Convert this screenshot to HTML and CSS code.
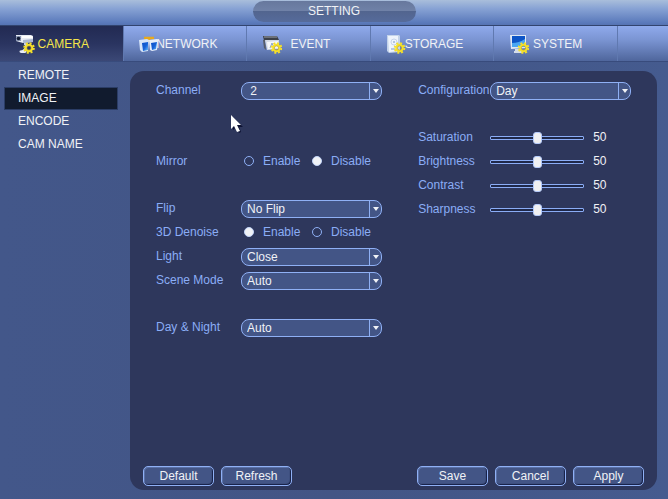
FILE: index.html
```
<!DOCTYPE html>
<html lang="en">
<head>
  <meta charset="UTF-8">
  <meta name="viewport" content="width=device-width, initial-scale=1.0">
  <title>Setting</title>
  <link rel="stylesheet" href="styles.css">
</head>
<body>
  <svg width="0" height="0" class="defs">
    <defs>
      <linearGradient id="blue" x1="0" y1="0" x2="1" y2="1">
        <stop offset="0" stop-color="#0a4fc4"/>
        <stop offset="0.55" stop-color="#1763d8"/>
        <stop offset="1" stop-color="#6cc4ff"/>
      </linearGradient>
      <g id="gear">
        <circle r="4.800" fill="none" stroke="#f5e02a" stroke-width="2" stroke-dasharray="2 1.770"/>
        <circle r="3.200" fill="none" stroke="#f5e02a" stroke-width="2.200"/>
        <circle r="2.100" fill="none" stroke="#b09420" stroke-width="0.500"/>
      </g>
    </defs>
  </svg>

  <header class="titlebar">
    <h1 class="title">SETTING</h1>
  </header>

  <nav class="tabs">
    <a class="tab active" href="#camera">
      <svg class="icon" viewBox="0 0 20 20">
        <path d="M1 1 L16 1 L18 2 L18 8 L8 9 L1 7 Z" fill="#e9edf5"/>
        <path d="M7 2 L17 2 L18 4 L7 4 Z" fill="#fff"/>
        <path d="M8 6 L18 5 L18 8 L8 9 Z" fill="#a9b6cf"/>
        <rect x="1" y="2" width="5" height="5" fill="#8d99b5"/>
        <circle cx="3.500" cy="4.500" r="1.800" fill="#111a33"/>
        <path d="M9 10 L11 10 L11 14 L8 17" fill="none" stroke="#c9d2e4" stroke-width="2"/>
        <ellipse cx="8" cy="17.500" rx="3.500" ry="1.500" fill="#e9edf5"/>
        <use href="#gear" x="14" y="14"/>
      </svg>
      <span class="tab-text">CAMERA</span>
    </a>
    <a class="tab" href="#network">
      <svg class="icon" viewBox="0 0 20 20">
        <path d="M5 4 H15 M10 3 V8" stroke="#e8a91c" stroke-width="2.500"/>
        <path d="M0 6 L8 5 L10 6 L9 17 L3 18 L1 16 Z" fill="#d7e5f8"/>
        <path d="M3 9 L9 8 L9 16 L4 17 Z" fill="url(#blue)"/>
        <path d="M10 6 L18 5 L19 6 L18 16 L13 17 L11 16 Z" fill="#e6effb"/>
        <path d="M12 9 L18 8 L17 15 L13 16 Z" fill="url(#blue)"/>
      </svg>
      <span class="tab-text">NETWORK</span>
    </a>
    <a class="tab" href="#event">
      <svg class="icon" viewBox="0 0 20 20">
        <path d="M1 2 L15 2 L17 6 L2 7 Z" fill="#3c4048"/>
        <path d="M2 3 H15" stroke="#9ba1ac" stroke-width="1"/>
        <path d="M1 6 L3 6 L4 16 L2 14 Z" fill="#565c68"/>
        <path d="M3 6 L17 6 L17 15 L5 16 Z" fill="#d5dbe6"/>
        <path d="M5 8 L16 7 L16 14 L6 15 Z" fill="#f5f7fa"/>
        <path d="M8 14 L10 9 L12 14" fill="none" stroke="#8aa2cb" stroke-width="1"/>
        <use href="#gear" x="14.500" y="14"/>
      </svg>
      <span class="tab-text">EVENT</span>
    </a>
    <a class="tab" href="#storage">
      <svg class="icon" viewBox="0 0 20 20">
        <path d="M1 1 L13 1 L14 2 L14 18 L3 19 L1 17 Z" fill="#c3d3ea"/>
        <path d="M2 2 L12 2 L12 17 L3 18 Z" fill="#eef4fc"/>
        <circle cx="8" cy="8" r="3" fill="none" stroke="#c6d4ea" stroke-width="1"/>
        <circle cx="8" cy="8" r="1" fill="#9fb5d9"/>
        <path d="M5 15 H9" stroke="#b4c6e3" stroke-width="2"/>
        <use href="#gear" x="13.500" y="14"/>
      </svg>
      <span class="tab-text">STORAGE</span>
    </a>
    <a class="tab" href="#system">
      <svg class="icon" viewBox="0 0 20 20">
        <path d="M1 1 L17 1 L17 14 L2 15 Z" fill="#dfe8f4"/>
        <path d="M3 2 L16 2 L16 13 L3 13 Z" fill="#0d54c6"/>
        <path d="M3 9 Q10 9 16 5 L16 13 L3 13 Z" fill="#4aa6f2"/>
        <path d="M6 15 H12 V17 H14 V19 H5 V17 H6 Z" fill="#d4dce8"/>
        <use href="#gear" x="14.500" y="14"/>
      </svg>
      <span class="tab-text">SYSTEM</span>
    </a>
  </nav>

  <div class="content">
    <aside class="sidebar">
      <a class="side-link" href="#remote">REMOTE</a>
      <a class="side-link selected" href="#image">IMAGE</a>
      <a class="side-link" href="#encode">ENCODE</a>
      <a class="side-link" href="#camname">CAM NAME</a>
    </aside>

    <form class="panel">
      <div class="fields">
        <div class="column left">
          <div class="group">
            <div class="row">
              <label class="label" for="channel">Channel</label>
              <span class="dropdown"><select id="channel"><option>&nbsp;2</option></select></span>
            </div>
          </div>
          <div class="group wide">
            <div class="row">
              <span class="label">Mirror</span>
              <label class="choice"><input type="radio" name="mirror">Enable</label>
              <label class="choice"><input type="radio" name="mirror" checked>Disable</label>
            </div>
          </div>
          <div class="group spaced">
            <div class="row">
              <label class="label" for="flip">Flip</label>
              <span class="dropdown"><select id="flip"><option>No Flip</option></select></span>
            </div>
            <div class="row">
              <span class="label">3D Denoise</span>
              <label class="choice"><input type="radio" name="denoise" checked>Enable</label>
              <label class="choice"><input type="radio" name="denoise">Disable</label>
            </div>
            <div class="row">
              <label class="label" for="light">Light</label>
              <span class="dropdown"><select id="light"><option>Close</option></select></span>
            </div>
            <div class="row">
              <label class="label" for="scene">Scene Mode</label>
              <span class="dropdown"><select id="scene"><option>Auto</option></select></span>
            </div>
          </div>
          <div class="group spaced">
            <div class="row">
              <label class="label" for="daynight">Day &amp; Night</label>
              <span class="dropdown"><select id="daynight"><option>Auto</option></select></span>
            </div>
          </div>
        </div>

        <div class="column right">
          <div class="group">
            <div class="row">
              <label class="label" for="config">Configuration</label>
              <span class="dropdown"><select id="config"><option>Day</option></select></span>
            </div>
          </div>
          <div class="group spaced">
            <div class="row">
              <label class="label" for="saturation">Saturation</label>
              <input class="slider" type="range" id="saturation" value="50">
              <output class="value" for="saturation">50</output>
            </div>
            <div class="row">
              <label class="label" for="brightness">Brightness</label>
              <input class="slider" type="range" id="brightness" value="50">
              <output class="value" for="brightness">50</output>
            </div>
            <div class="row">
              <label class="label" for="contrast">Contrast</label>
              <input class="slider" type="range" id="contrast" value="50">
              <output class="value" for="contrast">50</output>
            </div>
            <div class="row">
              <label class="label" for="sharpness">Sharpness</label>
              <input class="slider" type="range" id="sharpness" value="50">
              <output class="value" for="sharpness">50</output>
            </div>
          </div>
        </div>
      </div>

      <div class="actions">
        <button class="btn" type="button">Default</button>
        <button class="btn" type="button">Refresh</button>
        <button class="btn push" type="button">Save</button>
        <button class="btn" type="button">Cancel</button>
        <button class="btn" type="button">Apply</button>
      </div>
    </form>
  </div>

  <!-- mouse pointer -->
  <svg class="pointer" viewBox="0 0 12 18">
    <path d="M2 2 L2 15 L5 12 L8 18 L10 17 L8 12 L12 12 Z" fill="#0d1233"/>
    <path d="M0 0 L0 14 L3 11 L6 17 L9 16 L6 10 L10 10 Z" fill="#fff"/>
  </svg>
</body>
</html>
```

FILE: styles.css
```
* {
  box-sizing: border-box;
}

body {
  margin: 0;
  min-height: 100vh;
  display: flex;
  flex-direction: column;
  position: relative;
  font-family: "Liberation Sans", Arial, sans-serif;
  font-size: 12px;
  color: #f0f2f6;
  background: #435586;
}

a {
  color: inherit;
  text-decoration: none;
}

.defs {
  position: absolute;
}

/* title */
.titlebar {
  display: flex;
  justify-content: center;
  height: 26px;
  padding-top: 1px;
  background: linear-gradient(#a9bedb, #87a2d4 35%, #5b7abb 90%, #5573b2);
  border-bottom: 1px solid #32446f;
}

.title {
  width: 163px;
  height: 21px;
  margin: 0;
  border-radius: 11px;
  font-size: 12px;
  font-weight: normal;
  line-height: 21px;
  text-align: center;
  background: linear-gradient(#67789d, #7082a8 50%, #52658f 50%, #566b9b);
}

/* tabs */
.tabs {
  display: grid;
  grid-template-columns: repeat(5, 18.5%);
  height: 36px;
  background: linear-gradient(#8faaec, #7a94d2 40%, #4f669c);
  border-bottom: 1px solid #384b7c;
}

.tab {
  display: grid;
  align-items: center;
  padding-left: 4px;
  border-right: 1px solid #6079b0;
}

.tab.active {
  color: #f6e64a;
  background: linear-gradient(#222a52, #2a3460 50%, #3b4876);
}

.icon {
  grid-area: 1 / 1;
  width: 20px;
  height: 20px;
  margin-left: 11px;
}

.tab-text {
  grid-area: 1 / 1;
  justify-self: center;
  z-index: 1;
}

/* side menu */
.content {
  flex: 1;
  display: flex;
  padding: 2px 11px 9px 4px;
  background: linear-gradient(90deg, #43578a, #425585 50%, #455b8f);
}

.sidebar {
  width: 114px;
  margin-right: 12px;
}

.side-link {
  display: block;
  height: 23px;
  padding-left: 14px;
  line-height: 23px;
}

.side-link.selected {
  background: #111b2e;
  border: 1px solid #2b3d66;
  padding-left: 13px;
  line-height: 21px;
}

/* settings panel */
.panel {
  flex: 1;
  display: flex;
  flex-direction: column;
  margin-top: 7px;
  padding: 8px 13px 4px;
  border-radius: 14px;
  background: #2e375c;
}

.fields {
  flex: 1;
  display: grid;
  grid-template-columns: 17fr 16fr;
  gap: 36px;
  padding: 0 13px;
}

.group.spaced {
  margin-top: 23px;
}

.group.wide {
  margin-top: 47px;
}

.row {
  display: flex;
  align-items: center;
  height: 24px;
}

.label {
  width: 85px;
  padding-bottom: 2px;
  color: #8badf6;
  white-space: nowrap;
}

.right .label {
  width: 72px;
}

.dropdown {
  flex: 1;
  position: relative;
}

.dropdown select {
  display: block;
  appearance: none;
  width: 100%;
  height: 18px;
  margin: 0;
  padding: 0 18px 0 5px;
  border: 1px solid #8fb0f5;
  border-radius: 8px;
  font: inherit;
  line-height: 16px;
  color: #f0f2f6;
  background: #435586;
}

.dropdown::before {
  content: "";
  position: absolute;
  top: 1px;
  right: 12px;
  width: 1px;
  height: 16px;
  background: #8fb0f5;
}

.dropdown::after {
  content: "";
  position: absolute;
  top: 7px;
  right: 3px;
  border: 3px solid transparent;
  border-top: 4px solid #f0f2f6;
}

.choice {
  display: flex;
  align-items: center;
  width: 68px;
  padding: 0 0 2px 3px;
  color: #8badf6;
}

.choice input {
  appearance: none;
  width: 10px;
  height: 10px;
  margin: 0 9px 0 0;
  border: 1px solid #8fb0f5;
  border-radius: 50%;
}

.choice input:checked {
  background: #f0f2f6;
  border-color: #c3d4f8;
}

.slider {
  appearance: none;
  width: 94px;
  height: 12px;
  margin: 0 9px 0 0;
  background: transparent;
}

.slider::-webkit-slider-runnable-track {
  height: 4px;
  border: 1px solid #8badf6;
  border-radius: 1px;
  background: #1f2849;
}

.slider::-webkit-slider-thumb {
  appearance: none;
  width: 9px;
  height: 12px;
  margin-top: -5px;
  border: 1px solid #b4c9f8;
  border-radius: 3px;
  background: #f0f0f2;
}

.value {
  padding-bottom: 2px;
}

/* buttons */
.actions {
  display: flex;
  gap: 7px;
}

.btn {
  width: 71px;
  height: 20px;
  padding: 0;
  border: 1px solid #8fb0f5;
  border-radius: 5px;
  font: inherit;
  color: #f0f2f6;
  background: #435586;
  box-shadow: inset -1px -1px 1px #161f45, inset 1px 1px 0 #5a70a6;
}

.btn.push {
  margin-left: auto;
}

.pointer {
  position: absolute;
  left: 231px;
  top: 115px;
  width: 12px;
  height: 18px;
}
```
